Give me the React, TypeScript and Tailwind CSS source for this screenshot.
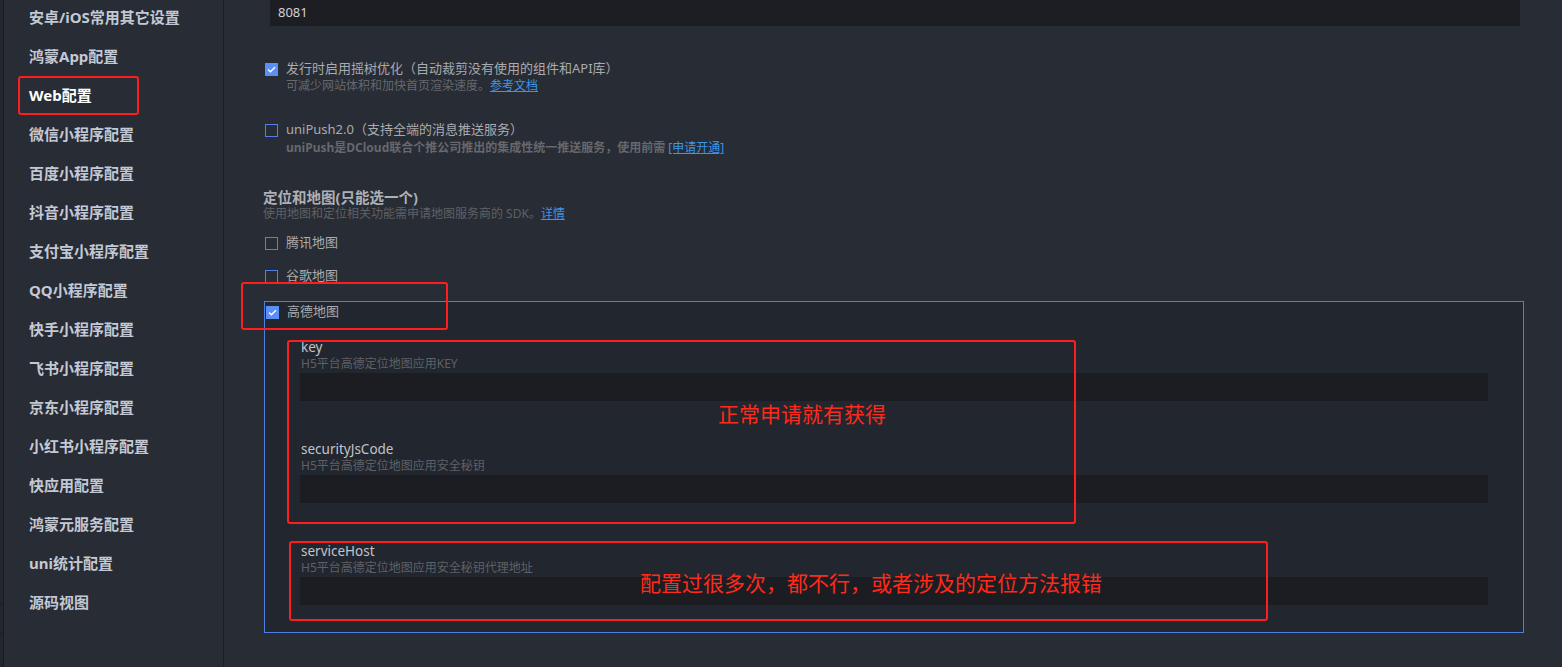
import React from "react";

const menu = [
  "安卓/iOS常用其它设置",
  "鸿蒙App配置",
  "Web配置",
  "微信小程序配置",
  "百度小程序配置",
  "抖音小程序配置",
  "支付宝小程序配置",
  "QQ小程序配置",
  "快手小程序配置",
  "飞书小程序配置",
  "京东小程序配置",
  "小红书小程序配置",
  "快应用配置",
  "鸿蒙元服务配置",
  "uni统计配置",
  "源码视图",
];

function Check({ checked }: { checked?: boolean }) {
  if (checked) {
    return (
      <span className="w-[13px] h-[13px] bg-[#5b8ef7] flex items-center justify-center shrink-0">
        <svg width="9" height="7" viewBox="0 0 9 7" fill="none">
          <path d="M1 3.6 L3.4 5.8 L8 1.2" stroke="#ffffff" strokeWidth="1.4" />
        </svg>
      </span>
    );
  }
  return <span className="w-[13px] h-[13px] border border-[#4f82e8] shrink-0" />;
}

function Field({ label, hint, first }: { label: string; hint: string; first?: boolean }) {
  return (
    <div className={first ? "mt-[17px]" : "mt-[39px]"}>
      <div className="pl-[1px] h-[18px] leading-[18px] text-[13.5px] text-[#c2c4c8]">{label}</div>
      <div className="pl-[1px] h-[16px] leading-[16px] text-[12px] text-[#5f6166]">{hint}</div>
      <div className="mt-[1px] h-[28px] bg-[#1c1d22]" />
    </div>
  );
}

export default function App() {
  return (
    <div className="relative w-full h-[667px] flex overflow-hidden bg-[#282c34] font-['Noto_Sans','Noto_Sans_CJK_SC',sans-serif]">
      {/* left strip */}
      <div className="w-[4px] shrink-0 bg-[#23262d] border-r border-[#1a1c21] flex flex-col">
        <div className="mt-[603px] h-[31px] border-y border-[#1a1c21]" />
      </div>

      {/* sidebar */}
      <aside className="w-[220px] shrink-0 bg-[#282c35] border-r border-[#1b1d22]">
        <ul className="-mt-[2px] pl-[25px]">
          {menu.map((m) => (
            <li
              key={m}
              className={`h-[39px] flex items-center text-[15px] font-bold ${
                m === "Web配置" ? "text-white" : "text-[#c3c9d4]"
              }`}
            >
              {m}
            </li>
          ))}
        </ul>
      </aside>

      {/* main */}
      <main className="flex-1 pl-[41px] pr-[37px]">
        <div className="ml-[5px] mr-[5px] h-[26px] bg-[#1d1e23] flex items-center px-2 text-[13px] text-[#d0d2d6]">
          8081
        </div>

        <div className="mt-[34px] h-[18px] flex items-center gap-2 text-[13px] text-[#a9abaf]">
          <Check checked />
          <span>发行时启用摇树优化（自动裁剪没有使用的组件和API库）</span>
        </div>
        <div className="pl-[21px] h-[16px] leading-[16px] text-[12px] text-[#66686d]">
          可减少网站体积和加快首页渲染速度。
          <span className="text-[#3d95ea] underline">参考文档</span>
        </div>

        <div className="mt-[27px] h-[18px] flex items-center gap-2 text-[13px] text-[#a9abaf]">
          <Check />
          <span>uniPush2.0（支持全端的消息推送服务）</span>
        </div>
        <div className="mt-[1px] pl-[21px] h-[16px] leading-[16px] text-[12px] font-bold text-[#66686d]">
          uniPush是DCloud联合个推公司推出的集成性统一推送服务，使用前需{" "}
          <span className="font-normal text-[#3d95ea] underline">[申请开通]</span>
        </div>

        <div className="mt-[32px] -ml-[2px] h-[18px] leading-[18px] text-[14.5px] font-bold text-[#aeb0b4]">
          定位和地图(只能选一个)
        </div>
        <div className="-ml-[2px] h-[16px] leading-[16px] text-[12px] text-[#5f6166]">
          使用地图和定位相关功能需申请地图服务商的 SDK。
          <span className="text-[#3d95ea] underline">详情</span>
        </div>

        <div className="mt-[12px] h-[18px] flex items-center gap-2 text-[13px] text-[#a9abaf]">
          <Check />
          <span>腾讯地图</span>
        </div>
        <div className="mt-[15px] h-[18px] flex items-center gap-2 text-[13px] text-[#a9abaf]">
          <Check />
          <span>谷歌地图</span>
        </div>

        <div className="mt-[16px] -ml-[1px] mr-[1px] border border-[#4a7fe3] bg-[#22262e] pl-[1px] pb-[27px]">
          <div className="h-[18px] mt-[1px] flex items-center gap-2 text-[13px] text-[#a9abaf]">
            <Check checked />
            <span>高德地图</span>
          </div>
          <div className="pl-[34px] pr-[35px]">
            <Field first label="key" hint="H5平台高德定位地图应用KEY" />
            <Field label="securityJsCode" hint="H5平台高德定位地图应用安全秘钥" />
            <Field label="serviceHost" hint="H5平台高德定位地图应用安全秘钥代理地址" />
          </div>
        </div>
      </main>

      {/* annotations */}
      <div className="absolute left-[18px] top-[76px] w-[121px] h-[39px] border-2 border-[#ff1e1e] rounded-[3px]" />
      <div className="absolute left-[241px] top-[282px] w-[207px] h-[48px] border-2 border-[#ff1e1e] rounded-[3px]" />
      <div className="absolute left-[287px] top-[340px] w-[789px] h-[184px] border-2 border-[#ff1e1e] rounded-[3px]" />
      <div className="absolute left-[289px] top-[541px] w-[979px] h-[80px] border-2 border-[#ff1e1e] rounded-[3px]" />
      <div className="absolute left-[718px] top-[401px] text-[21px] leading-[26px] text-[#ff2a1a]">
        正常申请就有获得
      </div>
      <div className="absolute left-[640px] top-[570px] text-[21px] leading-[26px] text-[#ff2a1a]">
        配置过很多次，都不行，或者涉及的定位方法报错
      </div>
    </div>
  );
}
